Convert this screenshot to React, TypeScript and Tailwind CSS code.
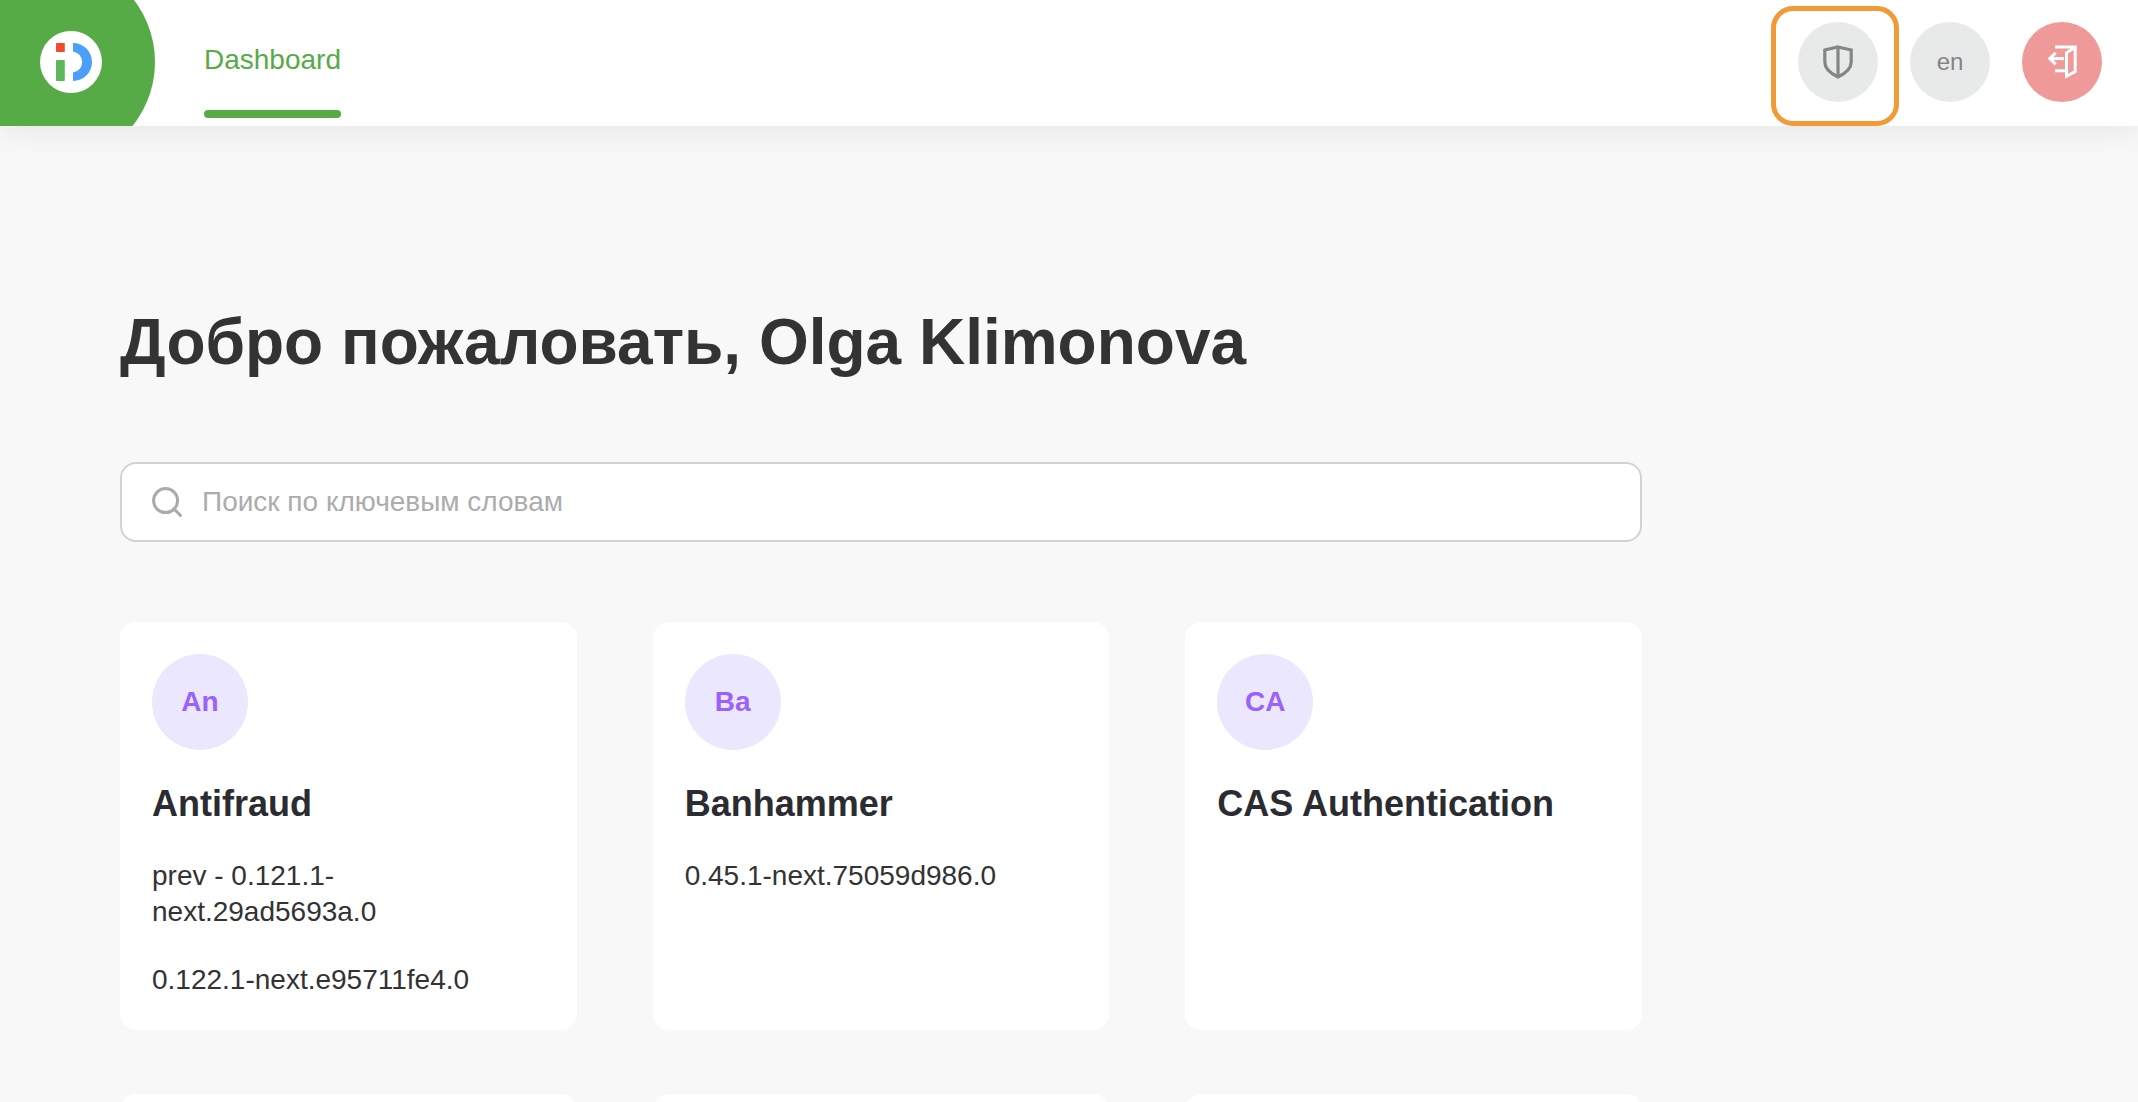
type Service = {
  initials: string;
  name: string;
  versions: string[];
};

const services: Service[] = [
  {
    initials: "An",
    name: "Antifraud",
    versions: ["prev - 0.121.1-next.29ad5693a.0", "0.122.1-next.e95711fe4.0"],
  },
  {
    initials: "Ba",
    name: "Banhammer",
    versions: ["0.45.1-next.75059d986.0"],
  },
  { initials: "CA", name: "CAS Authentication", versions: [] },
];

function Logo() {
  return (
    <svg viewBox="0 0 62 62" className="size-[62px]" aria-hidden="true">
      <circle cx="31" cy="31" r="31" fill="#fff" />
      <rect x="16" y="12" width="8.8" height="9" rx="0.8" fill="#f04b2a" />
      <rect x="16" y="29" width="8.8" height="21" rx="0.8" fill="#5cb85a" />
      <path
        d="M33 12a19 19 0 0 1 0 38v-8.4a10.7 10.7 0 0 0 0-21.2z"
        fill="#4a9ffb"
      />
    </svg>
  );
}

function ShieldIcon() {
  return (
    <svg
      viewBox="0 0 30 34"
      className="h-[34px] w-[30px]"
      fill="none"
      stroke="currentColor"
      strokeWidth="3.2"
      aria-hidden="true"
    >
      <path d="M15 2 28.2 5V17C28.2 24 22.5 28.4 15 32 7.5 28.4 1.8 24 1.8 17V5Z" />
      <path d="M15 2v30" />
    </svg>
  );
}

function ExitIcon() {
  return (
    <svg
      viewBox="0 0 30 34"
      className="h-[34px] w-[30px]"
      fill="none"
      stroke="currentColor"
      strokeWidth="3"
      aria-hidden="true"
    >
      <path d="M8 1.9h20.2v24.6l-8.7 4.8V7.8l8-5" />
      <path d="M8 25.8h10.5" />
      <path d="M3 13.6h14" />
      <path d="M8.6 7.8 2.8 13.6l5.8 5.8" />
    </svg>
  );
}

function SearchIcon() {
  return (
    <svg
      viewBox="0 0 30 30"
      className="size-[30px] shrink-0 text-[#a8aaac]"
      fill="none"
      stroke="currentColor"
      strokeWidth="3"
      strokeLinecap="round"
      aria-hidden="true"
    >
      <circle cx="13.6" cy="13.6" r="12" />
      <path d="m21.8 21.8 6.6 6.6" />
    </svg>
  );
}

function ServiceCard({ service }: { service: Service }) {
  return (
    <article className="flex flex-col gap-8 rounded-2xl bg-white p-8">
      <div className="flex size-24 items-center justify-center rounded-full bg-[#ebe7fe] text-[28px] font-bold text-[#9b62fb]">
        {service.initials}
      </div>
      <h2 className="text-4xl leading-[44px] font-bold text-[#2b2c31]">
        {service.name}
      </h2>
      {service.versions.map((version) => (
        <p key={version} className="text-[28px] leading-9">
          {version}
        </p>
      ))}
    </article>
  );
}

export default function App() {
  return (
    <div className="flex h-screen flex-col overflow-hidden bg-[#f8f8f8] font-['Liberation_Sans',Arial,sans-serif] text-[#333333]">
      <header className="relative flex h-[126px] shrink-0 bg-white shadow-[0_4px_32px_rgba(0,0,0,0.08)]">
        <a
          href="#home"
          aria-label="Home"
          className="relative flex w-[155px] items-start overflow-hidden pt-[31px] pl-10"
        >
          <span className="absolute -top-10 right-0 size-[204px] rounded-full bg-[#57ab46]" />
          <span className="relative">
            <Logo />
          </span>
        </a>
        <nav className="ml-[49px] flex flex-1 pb-2">
          <a
            href="#dashboard"
            className="flex flex-col justify-end gap-8 text-[28px] leading-9 text-[#57ab46]"
          >
            Dashboard
            <span className="h-2 rounded-full bg-[#57ab46]" />
          </a>
        </nav>
        <div className="flex items-start gap-8 pt-[22px] pr-9">
          <div className="relative">
            <button
              type="button"
              aria-label="Security"
              className="flex size-20 items-center justify-center rounded-full bg-[#e8eae9] text-[#838587]"
            >
              <ShieldIcon />
            </button>
            <span className="pointer-events-none absolute -top-4 -left-[27px] h-[120px] w-32 rounded-[22px] border-5 border-[#f19a38]" />
          </div>
          <button
            type="button"
            className="size-20 rounded-full bg-[#e8eae9] text-2xl text-[#838587]"
          >
            en
          </button>
          <button
            type="button"
            aria-label="Log out"
            className="flex size-20 items-center justify-center rounded-full bg-[#ef9a98] text-white"
          >
            <ExitIcon />
          </button>
        </div>
      </header>

      <main className="px-[120px] pt-44">
        <div className="flex max-w-[1522px] flex-col gap-20">
          <h1 className="text-[64px] leading-[80px] font-bold">
            Добро пожаловать, Olga Klimonova
          </h1>
          <label className="flex h-20 items-center gap-5 rounded-2xl border-2 border-[#d3d3d3] bg-white px-[30px]">
            <SearchIcon />
            <input
              type="search"
              aria-label="Поиск по ключевым словам"
              placeholder="Поиск по ключевым словам"
              className="h-full min-w-0 flex-1 bg-transparent text-[28px] outline-none placeholder:text-[#acacac]"
            />
          </label>
          <section className="grid grid-cols-3 gap-x-[76px] gap-y-16">
            {services.map((service) => (
              <ServiceCard key={service.name} service={service} />
            ))}
            <article className="h-40 rounded-2xl bg-white" />
            <article className="h-40 rounded-2xl bg-white" />
            <article className="h-40 rounded-2xl bg-white" />
          </section>
        </div>
      </main>
    </div>
  );
}
